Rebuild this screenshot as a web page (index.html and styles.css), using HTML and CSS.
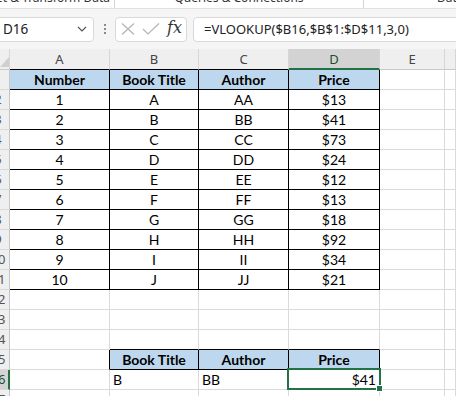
FILE: index.html
```html
<!DOCTYPE html>
<html lang="en">

<head>
   <meta charset="UTF-8">
   <meta name="viewport" content="width=device-width, initial-scale=1.0">
   <title>VLOOKUP Sheet</title>
   <link rel="stylesheet" href="styles.css">
</head>

<body>

   <!-- ribbon group labels, cut off at the top -->
   <div class="ribbon">
       <div class="group g1"><span>Get &amp; Transform Data</span></div>
       <div class="group g2"><span>Queries &amp; Connections</span></div>
       <div class="group g3"><span>Data Types</span></div>
   </div>

   <div class="formula-bar">
       <div class="name-box">
           <span>D16</span>
           <svg width="10" height="6" viewBox="0 0 10 6"><path d="M1 1 L5 5 L9 1" fill="none" stroke="#555" stroke-width="1.2"/></svg>
       </div>
       <div class="kebab"><i></i><i></i><i></i></div>
       <div class="fx-box">
           <svg width="14" height="12" viewBox="0 0 14 12"><path d="M1 0.5 L13 11.5 M13 0.5 L1 11.5" stroke="#b4b4b4" stroke-width="1.2" fill="none"/></svg>
           <svg width="18" height="12" viewBox="0 0 18 12"><path d="M1 6 L6 11 L17 0.5" stroke="#b4b4b4" stroke-width="1.2" fill="none"/></svg>
           <span class="fx">fx</span>
       </div>
       <div class="formula">=VLOOKUP($B16,$B$1:$D$11,3,0)</div>
   </div>

   <div class="sheet">
       <div class="row col-head">
           <div class="c corner"><svg width="9" height="10" viewBox="0 0 9 10"><path d="M9 0 L9 10 L0 10 Z" fill="#d0d0d0"/></svg></div>
           <div class="c top">A</div>
           <div class="c top">B</div>
           <div class="c top">C</div>
           <div class="c active">D</div>
           <div class="c">E</div>
           <div class="c"></div>
       </div>

       <div class="row">
           <div class="c rh"><span>1</span></div>
           <div class="c t hd">Number</div>
           <div class="c t hd">Book Title</div>
           <div class="c t hd">Author</div>
           <div class="c t hd">Price</div>
           <div class="c"></div><div class="c"></div>
       </div>
       <div class="row">
           <div class="c rh"><span>2</span></div>
           <div class="c t">1</div><div class="c t">A</div><div class="c t">AA</div><div class="c t">$13</div>
           <div class="c"></div><div class="c"></div>
       </div>
       <div class="row">
           <div class="c rh"><span>3</span></div>
           <div class="c t">2</div><div class="c t">B</div><div class="c t">BB</div><div class="c t">$41</div>
           <div class="c"></div><div class="c"></div>
       </div>
       <div class="row">
           <div class="c rh"><span>4</span></div>
           <div class="c t">3</div><div class="c t">C</div><div class="c t">CC</div><div class="c t">$73</div>
           <div class="c"></div><div class="c"></div>
       </div>
       <div class="row">
           <div class="c rh"><span>5</span></div>
           <div class="c t">4</div><div class="c t">D</div><div class="c t">DD</div><div class="c t">$24</div>
           <div class="c"></div><div class="c"></div>
       </div>
       <div class="row">
           <div class="c rh"><span>6</span></div>
           <div class="c t">5</div><div class="c t">E</div><div class="c t">EE</div><div class="c t">$12</div>
           <div class="c"></div><div class="c"></div>
       </div>
       <div class="row">
           <div class="c rh"><span>7</span></div>
           <div class="c t">6</div><div class="c t">F</div><div class="c t">FF</div><div class="c t">$13</div>
           <div class="c"></div><div class="c"></div>
       </div>
       <div class="row">
           <div class="c rh"><span>8</span></div>
           <div class="c t">7</div><div class="c t">G</div><div class="c t">GG</div><div class="c t">$18</div>
           <div class="c"></div><div class="c"></div>
       </div>
       <div class="row">
           <div class="c rh"><span>9</span></div>
           <div class="c t">8</div><div class="c t">H</div><div class="c t">HH</div><div class="c t">$92</div>
           <div class="c"></div><div class="c"></div>
       </div>
       <div class="row">
           <div class="c rh"><span>10</span></div>
           <div class="c t">9</div><div class="c t">I</div><div class="c t">II</div><div class="c t">$34</div>
           <div class="c"></div><div class="c"></div>
       </div>
       <div class="row">
           <div class="c rh"><span>11</span></div>
           <div class="c t">10</div><div class="c t">J</div><div class="c t">JJ</div><div class="c t">$21</div>
           <div class="c"></div><div class="c"></div>
       </div>
       <div class="row">
           <div class="c rh"><span>12</span></div>
           <div class="c"></div><div class="c"></div><div class="c"></div><div class="c"></div>
           <div class="c"></div><div class="c"></div>
       </div>
       <div class="row">
           <div class="c rh"><span>13</span></div>
           <div class="c"></div><div class="c"></div><div class="c"></div><div class="c"></div>
           <div class="c"></div><div class="c"></div>
       </div>
       <div class="row">
           <div class="c rh"><span>14</span></div>
           <div class="c"></div><div class="c above"></div><div class="c above"></div><div class="c above"></div>
           <div class="c"></div><div class="c"></div>
       </div>
       <div class="row">
           <div class="c rh"><span>15</span></div>
           <div class="c edge"></div>
           <div class="c t hd">Book Title</div>
           <div class="c t hd">Author</div>
           <div class="c t hd">Price</div>
           <div class="c"></div><div class="c"></div>
       </div>
       <div class="row">
           <div class="c rh current"><span>16</span></div>
           <div class="c"></div>
           <div class="c">B</div>
           <div class="c">BB</div>
           <div class="c num sel">$41</div>
           <div class="c"></div><div class="c"></div>
       </div>
       <div class="row">
           <div class="c rh"><span>17</span></div>
           <div class="c"></div><div class="c"></div><div class="c"></div><div class="c"></div>
           <div class="c"></div><div class="c"></div>
       </div>
   </div>

</body>

</html>
```

FILE: styles.css
```css
body {
    margin: 0;
    width: 456px;
    height: 396px;
    overflow: hidden;
    background-color: white;
    font-family: "Noto Sans", sans-serif;
}

/* ribbon strip */
.ribbon {
    display: flex;
    height: 8px;
    overflow: hidden;
    background-color: white;
    border-bottom: 1px solid #e1e1e1;
    font-size: 12px;
    color: #333;
}

.group {
    flex-shrink: 0;
    height: 8px;
    white-space: nowrap;
    overflow: hidden;
}

.group span {
    display: block;
    line-height: 12px;
    margin-top: -8px;
}

.g1 {
    width: 115px;
    border-right: 1px solid #d4d4d4;
    display: flex;
    justify-content: flex-end;
    padding-right: 4px;
    box-sizing: border-box;
}

.g2 {
    width: 248px;
    border-right: 1px solid #d4d4d4;
    text-align: center;
}

.g3 {
    width: 93px;
    padding-left: 73px;
    box-sizing: border-box;
}

/* formula bar */
.formula-bar {
    display: flex;
    align-items: center;
    height: 40px;
    background-color: #f5f5f5;
}

.name-box,
.fx-box,
.formula {
    height: 25px;
    box-sizing: border-box;
    background-color: white;
    border: 1px solid #d9d9d9;
    border-radius: 4px;
    display: flex;
    align-items: center;
}

.name-box {
    width: 100px;
    margin-left: -6px;
    padding: 0 6px 0 8px;
    justify-content: space-between;
    font-size: 13.5px;
    color: #222;
}

.kebab {
    display: flex;
    flex-direction: column;
    gap: 2px;
    margin-left: 10px;
    margin-right: 9px;
}

.kebab i {
    display: block;
    width: 2px;
    height: 2px;
    background-color: #8a8a8a;
}

.fx-box {
    width: 72px;
    padding: 0 4px 0 5px;
    justify-content: space-between;
}

.fx {
    font-family: "DejaVu Serif", "Liberation Serif", serif;
    font-style: italic;
    font-size: 16px;
    color: #333;
    margin-top: -3px;
}

.formula {
    flex-grow: 1;
    margin-left: 6px;
    margin-right: -10px;
    padding-left: 10px;
    font-size: 13px;
    color: #222;
}

/* grid */
.row {
    display: grid;
    grid-template-columns: 10px 100px 89px 90px 91px 65px 1fr;
    height: 20px;
}

.c {
    box-sizing: border-box;
    border-right: 1px solid #dadada;
    border-bottom: 1px solid #dadada;
    font-family: Lato, "Liberation Sans", sans-serif;
    font-size: 14px;
    line-height: 19px;
    padding: 0 3px;
    white-space: nowrap;
    overflow: hidden;
    color: black;
}

.col-head {
    height: 21px;
}

.col-head .c {
    background-color: #efefef;
    border-bottom-color: #c8c8c8;
    border-right-color: #d6d6d6;
    font-family: "Noto Sans", sans-serif;
    font-size: 13px;
    line-height: 20px;
    text-align: center;
    color: #444;
}

.col-head .top {
    border-bottom-color: black;
}

.col-head .active {
    background-color: #d3d3d3;
    border-bottom: 2px solid #217346;
    color: #1d4d33;
}

.col-head .corner {
    padding: 0;
    display: flex;
    align-items: flex-end;
    padding-bottom: 2px;
}

.rh {
    padding: 0;
    background-color: #efefef;
    border-right-color: #c6c6c6;
    border-bottom-color: #d9d9d9;
    font-family: "Noto Sans", sans-serif;
    font-size: 13px;
    color: #555;
}

.rh span {
    display: block;
    width: 26px;
    margin-left: -15px;
    text-align: center;
}

.rh.current {
    background-color: #d3d3d3;
    border-right: 2px solid #217346;
    color: #1d4d33;
}

.t {
    text-align: center;
    border-right-color: black;
    border-bottom-color: black;
}

.hd {
    background-color: #bdd7ee;
    font-weight: bold;
}

.above {
    border-bottom-color: black;
}

.edge {
    border-right-color: black;
}

.num {
    text-align: right;
}

/* selected cell */
.sel {
    position: relative;
    overflow: visible;
}

.sel::after {
    content: '';
    position: absolute;
    left: -2px;
    top: -2px;
    right: -2px;
    bottom: -1px;
    border: 2px solid #217346;
}

.sel::before {
    content: '';
    position: absolute;
    right: -4px;
    bottom: -3px;
    width: 5px;
    height: 5px;
    background-color: #217346;
    border: 1px solid white;
    z-index: 1;
}
```
